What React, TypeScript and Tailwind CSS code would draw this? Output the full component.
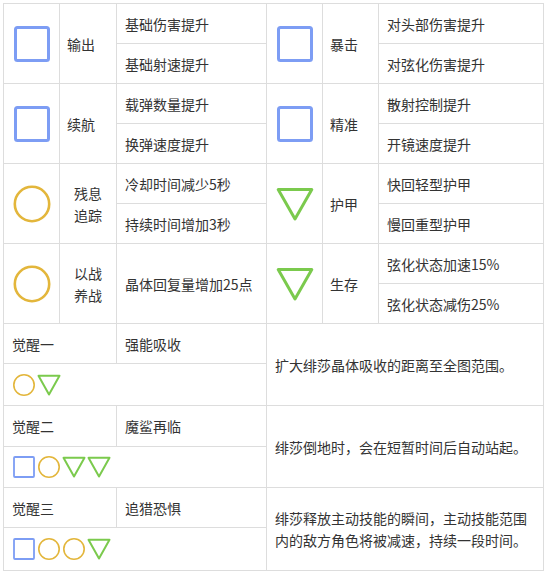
import React from "react";

type Shape = "square" | "circle" | "triangle";

const BLUE = "#7d9df4";
const YELLOW = "#e3b63b";
const GREEN = "#7bca4d";

const BigIcon = ({ shape }: { shape: Shape }) => {
  if (shape === "square")
    return (
      <svg width="40" height="40" viewBox="0 0 40 40">
        <rect x="3.5" y="3.5" width="33" height="33" rx="2" fill="none" stroke={BLUE} strokeWidth="3" />
      </svg>
    );
  if (shape === "circle")
    return (
      <svg width="40" height="40" viewBox="0 0 40 40">
        <circle cx="20" cy="20" r="17.2" fill="none" stroke={YELLOW} strokeWidth="2.6" />
      </svg>
    );
  return (
    <svg width="40" height="40" viewBox="0 0 40 40">
      <path d="M3.2 5.5 H36.8 L20 35 Z" fill="none" stroke={GREEN} strokeWidth="3" strokeLinejoin="round" />
    </svg>
  );
};

const SmallIcon = ({ shape }: { shape: Shape }) => {
  if (shape === "square")
    return (
      <svg width="24" height="24" viewBox="0 0 24 24">
        <rect x="2" y="2" width="20" height="20" rx="1" fill="none" stroke={BLUE} strokeWidth="1.8" />
      </svg>
    );
  if (shape === "circle")
    return (
      <svg width="24" height="24" viewBox="0 0 24 24">
        <circle cx="12" cy="12" r="10.2" fill="none" stroke={YELLOW} strokeWidth="1.6" />
      </svg>
    );
  return (
    <svg width="24" height="24" viewBox="0 0 24 24">
      <path d="M1.5 2.8 H22.5 L12 21.5 Z" fill="none" stroke={GREEN} strokeWidth="2" strokeLinejoin="round" />
    </svg>
  );
};

interface Group {
  shape: Shape;
  label: string[];
  items: string[];
}

const left: Group[] = [
  { shape: "square", label: ["输出"], items: ["基础伤害提升", "基础射速提升"] },
  { shape: "square", label: ["续航"], items: ["载弹数量提升", "换弹速度提升"] },
  { shape: "circle", label: ["残息", "追踪"], items: ["冷却时间减少5秒", "持续时间增加3秒"] },
  { shape: "circle", label: ["以战", "养战"], items: ["晶体回复量增加25点"] },
];

const right: Group[] = [
  { shape: "square", label: ["暴击"], items: ["对头部伤害提升", "对弦化伤害提升"] },
  { shape: "square", label: ["精准"], items: ["散射控制提升", "开镜速度提升"] },
  { shape: "triangle", label: ["护甲"], items: ["快回轻型护甲", "慢回重型护甲"] },
  { shape: "triangle", label: ["生存"], items: ["弦化状态加速15%", "弦化状态减伤25%"] },
];

const rowA = ["row-start-1", "row-start-3", "row-start-5", "row-start-7"];
const rowB = ["row-start-2", "row-start-4", "row-start-6", "row-start-8"];

const awaken = [
  {
    name: "觉醒一",
    skill: "强能吸收",
    icons: ["circle", "triangle"] as Shape[],
    desc: "扩大绯莎晶体吸收的距离至全图范围。",
    rows: ["row-start-9", "row-start-10", "row-start-9"],
  },
  {
    name: "觉醒二",
    skill: "魔鲨再临",
    icons: ["square", "circle", "triangle", "triangle"] as Shape[],
    desc: "绯莎倒地时，会在短暂时间后自动站起。",
    rows: ["row-start-11", "row-start-12", "row-start-11"],
  },
  {
    name: "觉醒三",
    skill: "追猎恐惧",
    icons: ["square", "circle", "circle", "triangle"] as Shape[],
    desc: "绯莎释放主动技能的瞬间，主动技能范围内的敌方角色将被减速，持续一段时间。",
    rows: ["row-start-13", "row-start-14", "row-start-13"],
  },
];

const cell = "border-r border-b border-[#dddddd] flex items-center";

export default function App() {
  const groups = (data: Group[], cols: string[]) =>
    data.map((g, i) => (
      <React.Fragment key={cols[0] + i}>
        <div className={`${cell} ${cols[0]} ${rowA[i]} row-span-2 justify-center`}>
          <BigIcon shape={g.shape} />
        </div>
        <div
          className={`${cell} ${cols[1]} ${rowA[i]} row-span-2 ${
            g.label.length > 1 ? "flex-col justify-center text-center" : "pl-[7px]"
          }`}
        >
          {g.label.map((l) => (
            <span key={l}>{l}</span>
          ))}
        </div>
        {g.items.length === 1 ? (
          <div className={`${cell} ${cols[2]} ${rowA[i]} row-span-2 pl-2`}>{g.items[0]}</div>
        ) : (
          <>
            <div className={`${cell} ${cols[2]} ${rowA[i]} pl-2`}>{g.items[0]}</div>
            <div className={`${cell} ${cols[2]} ${rowB[i]} pl-2`}>{g.items[1]}</div>
          </>
        )}
      </React.Fragment>
    ));

  return (
    <div className="min-h-screen bg-white pl-[3px] pt-[3px]">
      <div
        className="grid w-[541px] grid-cols-[56px_57px_150px_56px_56px_165px] grid-rows-[40px_40px_40px_40px_40px_40px_40px_40px_40px_42px_41px_41px_40px_43px] border-l border-t border-[#dddddd] text-[14px] leading-[22px] text-[#333333]"
        style={{ fontFamily: '"Noto Sans CJK SC", "Noto Sans", sans-serif' }}
      >
        {groups(left, ["col-start-1", "col-start-2", "col-start-3"])}
        {groups(right, ["col-start-4", "col-start-5", "col-start-6"])}

        {awaken.map((a) => (
          <React.Fragment key={a.name}>
            <div className={`${cell} col-start-1 col-span-2 ${a.rows[0]} pl-2`}>{a.name}</div>
            <div className={`${cell} col-start-3 ${a.rows[0]} pl-2`}>{a.skill}</div>
            <div className={`${cell} col-start-1 col-span-3 ${a.rows[1]} gap-px pl-2`}>
              {a.icons.map((s, k) => (
                <SmallIcon key={k} shape={s} />
              ))}
            </div>
            <div className={`${cell} col-start-4 col-span-3 ${a.rows[2]} row-span-2 px-2`}>{a.desc}</div>
          </React.Fragment>
        ))}
      </div>
    </div>
  );
}
